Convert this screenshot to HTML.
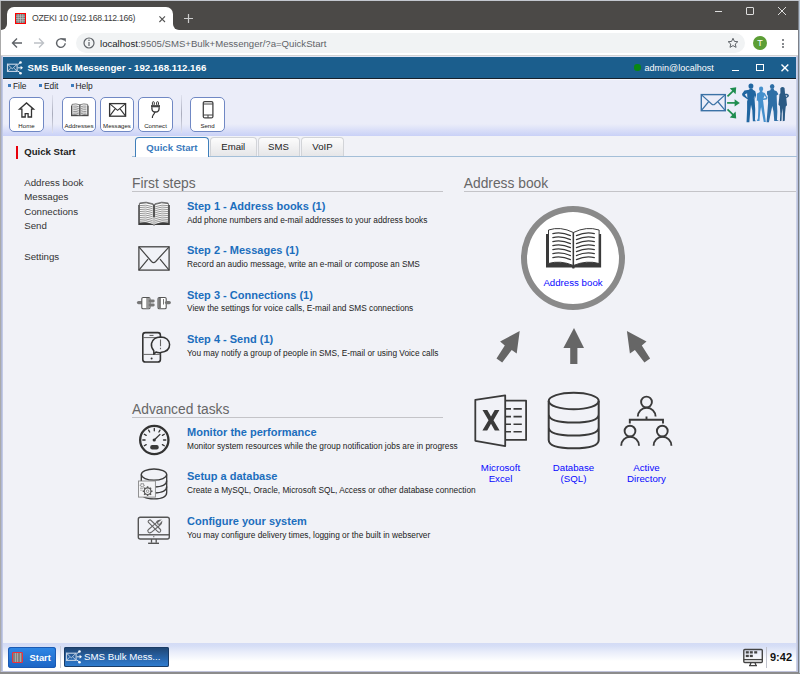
<!DOCTYPE html>
<html><head><meta charset="utf-8">
<style>
*{box-sizing:border-box;margin:0;padding:0}
html,body{width:800px;height:674px;overflow:hidden}
body{position:relative;background:#aaaaaa;font-family:"Liberation Sans",sans-serif;}
.a{position:absolute}
.t{position:absolute;line-height:1;white-space:nowrap}
svg{position:absolute;overflow:visible}
</style></head><body>

<!-- ===== Browser chrome ===== -->
<div class="a" style="left:0;top:0;width:800px;height:1px;background:#c3c7cf"></div>
<div class="a" style="left:1px;top:1px;width:797px;height:29px;background:#4b4947"></div>
<!-- tab -->
<div class="a" style="left:1px;top:23px;width:179px;height:7px;background:#fff"></div>
<div class="a" style="left:7px;top:7px;width:166px;height:23px;background:#fff;border-radius:7px 7px 0 0"></div>
<div class="a" style="left:1px;top:23px;width:6px;height:7px;background:#fff"></div>
<div class="a" style="left:1px;top:22px;width:6px;height:8px;background:#4b4947;border-bottom-right-radius:6px"></div>
<div class="a" style="left:173px;top:22px;width:7px;height:8px;background:#4b4947;border-bottom-left-radius:6px"></div>
<svg style="left:15px;top:13px" width="11" height="11" viewBox="0 0 11 11"><rect x="0.5" y="0.5" width="10" height="10" fill="#7a7a7a" stroke="#f00" stroke-width="1"/><path d="M1 3.2H10M1 5.5H10M1 7.8H10M3.2 1V10M5.5 1V10M7.8 1V10" stroke="#c5d0d0" stroke-width="0.6"/></svg>
<div class="t" style="left:32px;top:13.6px;font-size:8.7px;letter-spacing:-0.3px;color:#3c3c3c">OZEKI 10 (192.168.112.166)</div>
<svg style="left:159px;top:15.8px" width="7" height="7" viewBox="0 0 7 7"><path d="M0.4 0.4L6 6M6 0.4L0.4 6" stroke="#555" stroke-width="1.1"/></svg>
<svg style="left:184px;top:14px" width="9" height="9" viewBox="0 0 9 9"><path d="M4.5 0V9M0 4.5H9" stroke="#ccc" stroke-width="1.2"/></svg>
<!-- window controls -->
<div class="a" style="left:715px;top:11px;width:7px;height:1px;background:#ddd"></div>
<div class="a" style="left:746px;top:7px;width:8px;height:8px;border:1px solid #ddd;border-radius:1px"></div>
<svg style="left:778px;top:7px" width="8" height="8" viewBox="0 0 8 8"><path d="M0 0L8 8M8 0L0 8" stroke="#ddd" stroke-width="1"/></svg>

<!-- toolbar -->
<div class="a" style="left:1px;top:30px;width:797px;height:25px;background:#fff"></div>
<svg style="left:11px;top:37px" width="12" height="12" viewBox="0 0 12 12"><path d="M11 6H2M6 1.5L1.5 6L6 10.5" fill="none" stroke="#5f6368" stroke-width="1.4"/></svg>
<svg style="left:33px;top:37px" width="12" height="12" viewBox="0 0 12 12"><path d="M1 6H10M6 1.5L10.5 6L6 10.5" fill="none" stroke="#bdc1c6" stroke-width="1.4"/></svg>
<svg style="left:55px;top:37px" width="12" height="12" viewBox="0 0 12 12"><path d="M10.2 6.2A4.3 4.3 0 1 1 8.9 3" fill="none" stroke="#5f6368" stroke-width="1.4"/><path d="M7 1.2H10.8V5z" fill="#5f6368"/></svg>
<div class="a" style="left:76px;top:33px;width:669px;height:20px;border-radius:10px;background:#f1f3f4"></div>
<svg style="left:83px;top:37px" width="12" height="12" viewBox="0 0 12 12"><circle cx="6" cy="6" r="5" fill="none" stroke="#5f6368" stroke-width="1.2"/><path d="M6 5V9" stroke="#5f6368" stroke-width="1.2"/><circle cx="6" cy="3.3" r="0.8" fill="#5f6368"/></svg>
<div class="t" style="left:100px;top:38.8px;font-size:9.6px;color:#202124">localhost<span style="color:#5f6368">:9505/SMS+Bulk+Messenger/?a=QuickStart</span></div>
<svg style="left:727px;top:37px" width="12" height="12" viewBox="0 0 24 24"><path d="M12 2.5l2.8 6.3 6.9.6-5.2 4.6 1.6 6.7L12 17.2l-6 3.5 1.5-6.7L2.3 9.4l6.9-.6z" fill="none" stroke="#5f6368" stroke-width="2"/></svg>
<div class="a" style="left:753px;top:36px;width:14px;height:14px;border-radius:50%;background:#5c9e35"></div>
<div class="t" style="left:753px;top:38.5px;width:14px;text-align:center;font-size:9px;color:#fff">T</div>
<div class="a" style="left:782px;top:39px;width:2px;height:2px;background:#5f6368;border-radius:1px"></div>
<div class="a" style="left:782px;top:42.5px;width:2px;height:2px;background:#5f6368;border-radius:1px"></div>
<div class="a" style="left:782px;top:46px;width:2px;height:2px;background:#5f6368;border-radius:1px"></div>
<div class="a" style="left:1px;top:55px;width:797px;height:1px;background:#d2d2d2"></div>

<!-- ===== App ===== -->
<div class="a" id="app" style="left:1px;top:56px;width:797px;height:615px;background:#e4e6f4"></div>
<div class="a" style="left:3px;top:57px;width:793px;height:21px;background:#1b5e8d"></div>
<div class="a" style="left:3px;top:78px;width:793px;height:1px;background:#17222d"></div>
<div class="a" style="left:3px;top:79px;width:793px;height:1px;background:#f6f7fd"></div>
<!-- toolbar bg -->
<div class="a" style="left:3px;top:80px;width:793px;height:56px;background:linear-gradient(#ebedf9 0,#ebedf9 44px,#c9d1f7 56px)"></div>
<!-- content bg -->
<div class="a" style="left:3px;top:136px;width:793px;height:507px;background:#f1f2f7"></div>
<!-- taskbar -->
<div class="a" style="left:3px;top:643px;width:793px;height:27.5px;background:linear-gradient(#d3dbf5 0,#d6def6 3px,#e9edfa 9px,#fafbfe 16px,#fff 18px)"></div>
<div class="a" style="left:1px;top:670.5px;width:797px;height:1.7px;background:linear-gradient(#d6d9ee,#a9adc8)"></div>
<div class="a" style="left:0;top:672.2px;width:800px;height:1.8px;background:#8c8c8c"></div>
<div class="a" style="left:1.2px;top:56px;width:1.8px;height:615px;background:linear-gradient(90deg,#a7afcb,#ccd3ee)"></div>
<div class="a" style="left:795.6px;top:56px;width:2.3px;height:615px;background:linear-gradient(90deg,#e4e7f3,#bcc4e0 40%)"></div>
<div class="a" style="left:797.9px;top:1px;width:1.1px;height:672px;background:#7c8088"></div>
<div class="a" style="left:799px;top:1px;width:1px;height:672px;background:#b4c3d3"></div>


<!-- header content -->
<svg style="left:4px;top:58px" width="24" height="20" viewBox="0 0 24 20"><rect x="3.5" y="6.2" width="9.6" height="7.2" fill="none" stroke="#c9d6e6" stroke-width="1.1"/><path d="M3.5 6.2L8.3 10.8L13.1 6.2M3.5 13.4L6.5 10.2M13.1 13.4L10.1 10.2" fill="none" stroke="#c9d6e6" stroke-width="0.9"/><path d="M13.8 6.6L16.5 4.5M13.8 9.8H17.5M13.8 13L16.5 15" stroke="#dfe8f0" stroke-width="1" fill="none"/><circle cx="16.5" cy="4.5" r="1.3" fill="#f4f8fc"/><circle cx="16.5" cy="15.3" r="1.3" fill="#f4f8fc"/><path d="M19 9.8L16.6 7.8V11.8z" fill="#f4f8fc"/></svg>
<div class="t" style="left:27.5px;top:62.8px;font-size:9.7px;font-weight:bold;color:#fff">SMS Bulk Messenger - 192.168.112.166</div>
<div class="a" style="left:634.2px;top:64.4px;width:6.6px;height:6.6px;border-radius:50%;background:#0a8812"></div>
<div class="t" style="left:644.5px;top:64px;font-size:9px;color:#fff">admin@localhost</div>
<div class="a" style="left:731.6px;top:69.7px;width:7px;height:1.5px;background:#fff"></div>
<div class="a" style="left:756.2px;top:63.8px;width:7.6px;height:7.2px;border:1.5px solid #fff"></div>
<svg style="left:781.3px;top:63.6px" width="8" height="8" viewBox="0 0 8 8"><path d="M0.5 0.5L7.3 7.3M7.3 0.5L0.5 7.3" stroke="#fff" stroke-width="1.4"/></svg>

<!-- menu -->
<div class="a" style="left:8px;top:84.4px;width:2.9px;height:2.7px;background:#3d7bbd"></div>
<div class="t" style="left:13px;top:82.2px;font-size:8.4px;color:#222">File</div>
<div class="a" style="left:39.3px;top:84.4px;width:2.9px;height:2.7px;background:#3d7bbd"></div>
<div class="t" style="left:44px;top:82.2px;font-size:8.4px;color:#222">Edit</div>
<div class="a" style="left:70.8px;top:84.4px;width:2.9px;height:2.7px;background:#3d7bbd"></div>
<div class="t" style="left:75.5px;top:82.2px;font-size:8.4px;color:#222">Help</div>

<!-- toolbar buttons -->
<div class="a" style="left:9px;top:97px;width:34.5px;height:34.5px;border:1px solid #7088c4;border-radius:5px;background:#fff"></div>
<div class="a" style="left:62px;top:97px;width:34px;height:34.5px;border:1px solid #7088c4;border-radius:5px;background:#fff"></div>
<div class="a" style="left:100px;top:97px;width:34px;height:34.5px;border:1px solid #7088c4;border-radius:5px;background:#fff"></div>
<div class="a" style="left:138px;top:97px;width:34.5px;height:34.5px;border:1px solid #7088c4;border-radius:5px;background:#fff"></div>
<div class="a" style="left:190px;top:97px;width:34.5px;height:34.5px;border:1px solid #7088c4;border-radius:5px;background:#fff"></div>
<div class="a" style="left:52px;top:95px;width:1.2px;height:38px;background:linear-gradient(#dfe1ee,#a9acbc 50%,#dfe1ee)"></div>
<div class="a" style="left:181px;top:95px;width:1.2px;height:38px;background:linear-gradient(#dfe1ee,#a9acbc 50%,#dfe1ee)"></div>
<!-- icons -->
<svg style="left:9px;top:97px" width="35" height="35" viewBox="0 0 35 35"><path d="M10.4 12.2L17.5 5.9L24.6 12.2H22.5V20H19.1V16.6H16.2V20H12.9V12.2Z" fill="none" stroke="#333" stroke-width="1.3" stroke-linejoin="miter"/></svg>
<svg style="left:70.5px;top:102.8px" width="17.6" height="13.4" viewBox="0 0 17.6 13.4"><rect x="0" y="2.6" width="17.6" height="10.6" fill="#484848"/><path d="M1 1.4Q4.8 0.2 8.8 1.8V12.6Q4.8 11.2 1 12Z M16.6 1.4Q12.8 0.2 8.8 1.8V12.6Q12.8 11.2 16.6 12Z" fill="#f2f2f2" stroke="#555" stroke-width="0.7"/><path d="M2.2 3.2Q5 2.6 7.8 3.8M2.2 5.0Q5 4.4 7.8 5.6M2.2 6.8Q5 6.2 7.8 7.4M2.2 8.6Q5 8.0 7.8 9.2M2.2 10.2Q5 9.6 7.8 10.8M15.4 3.2Q12.6 2.6 9.8 3.8M15.4 5.0Q12.6 4.4 9.8 5.6M15.4 6.8Q12.6 6.2 9.8 7.4M15.4 8.6Q12.6 8.0 9.8 9.2M15.4 10.2Q12.6 9.6 9.8 10.8" fill="none" stroke="#777" stroke-width="0.75"/><path d="M8.8 1.8V13" stroke="#555" stroke-width="0.8"/></svg>
<svg style="left:100px;top:97px" width="35" height="35" viewBox="0 0 35 35"><rect x="9.6" y="6.6" width="16" height="12.6" fill="none" stroke="#333" stroke-width="1.3"/><path d="M9.6 6.6L17.6 13.4L25.6 6.6M9.6 19.2L15.3 11.6M25.6 19.2L19.9 11.6" fill="none" stroke="#333" stroke-width="1.1"/></svg>
<svg style="left:138px;top:97px" width="35" height="35" viewBox="0 0 35 35"><rect x="14.4" y="4.7" width="1.9" height="3.6" rx="0.9" fill="none" stroke="#333" stroke-width="1"/><rect x="18.6" y="4.7" width="1.9" height="3.6" rx="0.9" fill="none" stroke="#333" stroke-width="1"/><rect x="13" y="8.1" width="9" height="2.2" fill="#444"/><path d="M13.9 10.2V11.5Q13.9 15 17.5 15Q21.1 15 21.1 11.5V10.2" fill="none" stroke="#333" stroke-width="1.3"/><path d="M17 15Q16.2 17 15.2 18Q14.2 19.3 14.4 21" fill="none" stroke="#333" stroke-width="1.2"/></svg>
<svg style="left:190px;top:97px" width="35" height="35" viewBox="0 0 35 35"><rect x="13.3" y="4.6" width="9.6" height="16.3" rx="1.5" fill="none" stroke="#444" stroke-width="1.3"/><path d="M13.3 7H22.9M13.3 18H22.9M18 18V20.9" stroke="#444" stroke-width="1"/></svg>
<div class="t" style="left:9px;top:122.5px;width:35px;text-align:center;font-size:6.1px;color:#222">Home</div>
<div class="t" style="left:62px;top:122.5px;width:34px;text-align:center;font-size:6.2px;color:#222">Addresses</div>
<div class="t" style="left:100px;top:122.5px;width:34px;text-align:center;font-size:6.1px;color:#222">Messages</div>
<div class="t" style="left:138px;top:122.5px;width:35px;text-align:center;font-size:6.1px;color:#222">Connect</div>
<div class="t" style="left:190px;top:122.5px;width:35px;text-align:center;font-size:6.1px;color:#222">Send</div>

<!-- logo -->
<svg style="left:738px;top:80px" width="56" height="46" viewBox="0 0 800 657">
<g fill="#4590cd"><ellipse cx="330" cy="127" rx="30" ry="33"/><path fill-rule="evenodd" d="M315 155L345 155L352 175L382 187L422 255L410 278L357 287L362 322L377 450L398 600L368 600L342 455L330 385L318 455L307 585L268 585L285 545L290 420L290 322L285 292L268 300L272 192L308 175Z M382 218L402 258L362 265Z"/></g>
<g fill="#2b5a85"><path fill-rule="evenodd" d="M605 118Q635 80 665 115L672 198L702 195L728 215L722 238L690 262L700 362L682 377L672 480L668 583L640 588L640 480L634 405L626 480L622 583L598 588L604 480L598 372L578 352L588 262L592 202L606 188Z M680 218L706 222L688 248Z"/></g>
<g fill="#2e6ea6"><ellipse cx="488" cy="93" rx="32" ry="37"/><path d="M468 125L510 125L517 145L552 160L577 205L552 222L556 330L562 450L557 572L585 587L518 587L508 452L490 372L472 452L442 603L408 603L420 452L430 330L425 222L413 202L415 160L462 145Z"/></g>
<g fill="#2166a1"><ellipse cx="185" cy="87" rx="35" ry="38"/><path fill-rule="evenodd" d="M165 120L207 120L212 140L247 160L260 215L242 268L226 264L232 218L238 292L246 420L242 568L254 588L212 588L204 432L186 352L176 432L162 603L122 603L130 422L130 302L140 278L66 228L57 200L92 150L160 140Z M97 206L130 190L134 256Z"/></g>
</svg>
<svg style="left:699px;top:82px" width="92" height="42" viewBox="0 0 92 42"><rect x="2.3" y="12.6" width="24" height="16.1" fill="none" stroke="#3b72a6" stroke-width="1.4"/><path d="M2.3 12.6L12.6 22Q14.3 23.5 16 22L26.3 12.6M2.3 28.7L9.4 20M26.3 28.7L19.1 20" fill="none" stroke="#3b72a6" stroke-width="1.2"/>
<g stroke="#1e8d4f" stroke-width="1.7" fill="#1e8d4f"><path d="M28.5 14.4L34.5 8.6"/><path d="M37.2 5.2L30.8 6.3L36.6 12.2Z" stroke="none"/><path d="M28.1 20.9H36.5"/><path d="M40.8 20.9L35.6 17.2V24.6Z" stroke="none"/><path d="M28.5 27.4L34.5 33.2"/><path d="M37.2 36.6L30.8 35.5L36.6 29.6Z" stroke="none"/></g></svg>


<!-- sidebar -->
<div class="a" style="left:16px;top:146px;width:2.2px;height:13px;background:#e8000b"></div>
<div class="t" style="left:24.3px;top:147.2px;font-size:9.6px;font-weight:bold;color:#222">Quick Start</div>
<div class="t" style="left:24.2px;top:177.8px;font-size:9.7px;color:#333">Address book</div>
<div class="t" style="left:24.2px;top:192.3px;font-size:9.7px;color:#333">Messages</div>
<div class="t" style="left:24.2px;top:206.8px;font-size:9.7px;color:#333">Connections</div>
<div class="t" style="left:24.2px;top:221.3px;font-size:9.7px;color:#333">Send</div>
<div class="t" style="left:24.2px;top:251.5px;font-size:9.7px;color:#333">Settings</div>

<!-- tabs -->
<div class="a" style="left:131.5px;top:156px;width:665px;height:1.3px;background:#a4bfd8"></div>
<div class="a" style="left:210px;top:136.6px;width:46.5px;height:19.9px;border:1px solid #d2d4d8;border-bottom:none;border-radius:4px 4px 0 0;background:linear-gradient(#fcfcfc,#e6e6e8)"></div>
<div class="a" style="left:257.5px;top:136.6px;width:42px;height:19.9px;border:1px solid #d2d4d8;border-bottom:none;border-radius:4px 4px 0 0;background:linear-gradient(#fcfcfc,#e6e6e8)"></div>
<div class="a" style="left:300.8px;top:136.6px;width:43.4px;height:19.9px;border:1px solid #d2d4d8;border-bottom:none;border-radius:4px 4px 0 0;background:linear-gradient(#fcfcfc,#e6e6e8)"></div>
<div class="a" style="left:134.8px;top:136.8px;width:74.3px;height:20.5px;border:1.2px solid #3f7fba;border-top-width:1.4px;border-bottom:none;border-radius:4px 4px 0 0;background:#fff"></div>
<div class="t" style="left:134.8px;top:142.6px;width:74.3px;text-align:center;font-size:9.6px;font-weight:bold;color:#3b7bbd">Quick Start</div>
<div class="t" style="left:210px;top:142.2px;width:46.5px;text-align:center;font-size:9.6px;color:#222">Email</div>
<div class="t" style="left:257.5px;top:142.2px;width:42px;text-align:center;font-size:9.6px;color:#222">SMS</div>
<div class="t" style="left:300.8px;top:142.2px;width:43.4px;text-align:center;font-size:9.6px;color:#222">VoIP</div>

<!-- headings -->
<div class="t" style="left:132px;top:176.7px;font-size:13.8px;color:#676767">First steps</div>
<div class="a" style="left:132px;top:191px;width:311px;height:1px;background:#c4c4c8"></div>
<div class="t" style="left:463.8px;top:176.7px;font-size:13.8px;color:#676767">Address book</div>
<div class="a" style="left:464px;top:191px;width:332px;height:1px;background:#c4c4c8"></div>
<div class="t" style="left:132px;top:402.9px;font-size:13.8px;color:#676767">Advanced tasks</div>
<div class="a" style="left:132px;top:417px;width:311px;height:1px;background:#c4c4c8"></div>

<!-- steps -->
<div class="t" style="left:187px;top:200.9px;font-size:11px;font-weight:bold;color:#1c6ebd">Step 1 - Address books (1)</div>
<div class="t" style="left:187px;top:216.3px;font-size:8.3px;color:#222">Add phone numbers and e-mail addresses to your address books</div>
<div class="t" style="left:187px;top:245.4px;font-size:11px;font-weight:bold;color:#1c6ebd">Step 2 - Messages (1)</div>
<div class="t" style="left:187px;top:260.3px;font-size:8.3px;color:#222">Record an audio message, write an e-mail or compose an SMS</div>
<div class="t" style="left:187px;top:289.8px;font-size:11px;font-weight:bold;color:#1c6ebd">Step 3 - Connections (1)</div>
<div class="t" style="left:187px;top:304.4px;font-size:8.3px;color:#222">View the settings for voice calls, E-mail and SMS connections</div>
<div class="t" style="left:187px;top:333.7px;font-size:11px;font-weight:bold;color:#1c6ebd">Step 4 - Send (1)</div>
<div class="t" style="left:187px;top:349px;font-size:8.3px;color:#222">You may notify a group of people in SMS, E-mail or using Voice calls</div>

<div class="t" style="left:187px;top:426.7px;font-size:11px;font-weight:bold;color:#1c6ebd">Monitor the performance</div>
<div class="t" style="left:187px;top:441.5px;font-size:8.3px;color:#222">Monitor system resources while the group notification jobs are in progress</div>
<div class="t" style="left:187px;top:471.1px;font-size:11px;font-weight:bold;color:#1c6ebd">Setup a database</div>
<div class="t" style="left:187px;top:485.8px;font-size:8.3px;color:#222">Create a MySQL, Oracle, Microsoft SQL, Access or other database connection</div>
<div class="t" style="left:187px;top:515.9px;font-size:11px;font-weight:bold;color:#1c6ebd">Configure your system</div>
<div class="t" style="left:187px;top:531px;font-size:8.3px;color:#222">You may configure delivery times, logging or the built in webserver</div>


<!-- symbols -->
<svg width="0" height="0" style="position:absolute;left:0;top:0"><defs>
<symbol id="book" viewBox="5.6 6 55.4 40.5">
<rect x="5.6" y="12" width="55.3" height="33.5" fill="#3a3a3a"/>
<path d="M8.1 8Q20 4 33 10.5V43.5Q20 38 8.1 41.5Z M58.7 8Q46 4 33 10.5V43.5Q46 38 58.7 41.5Z" fill="#fff" stroke="#3a3a3a" stroke-width="1"/>
<path d="M33 10.5V45.5" stroke="#3a3a3a" stroke-width="1.4"/>
<circle cx="33" cy="45.8" r="1.3" fill="#3a3a3a"/>
<g fill="none" stroke="#3a3a3a" stroke-width="1.15" stroke-linecap="round">
<path d="M12.4 11.6Q21 9.6 30.1 13.6M12.4 15.6Q21 13.6 30.1 17.6M12.4 19.6Q21 17.6 30.1 21.6M12.4 23.6Q21 21.6 30.1 25.6M12.4 27.6Q21 25.6 30.1 29.6M12.4 31.6Q21 29.6 30.1 33.6M12.4 35.6Q21 33.6 30.1 37.6"/>
<path d="M54 11.6Q45 9.6 36 13.6M54 15.6Q45 13.6 36 17.6M54 19.6Q45 17.6 36 21.6M54 23.6Q45 21.6 36 25.6M54 27.6Q45 25.6 36 29.6M54 31.6Q45 29.6 36 33.6M54 35.6Q45 33.6 36 37.6"/>
</g></symbol>
</defs></svg>

<!-- step icons -->
<svg style="left:136px;top:200px" width="36" height="28" viewBox="0 0 36 28"><rect x="2.3" y="5" width="31.5" height="20" fill="#3c3c3c"/>
<path d="M3.4 3.6Q10 1.6 17.3 4.5V24.6Q10 21.2 3.4 23Z M32.4 3.6Q25.8 1.6 18.7 4.5V24.6Q25.8 21.2 32.4 23Z" fill="#fff" stroke="#444" stroke-width="0.8"/>
<path d="M3.6 2.9Q10 1 17.3 3.8M32.2 2.9Q25.8 1 18.7 3.8" fill="none" stroke="#555" stroke-width="0.7"/>
<path d="M3.9 5.6Q9.5 4.2 16.4 6.7M3.9 7.5Q9.5 6.1 16.4 8.6M3.9 9.5Q9.5 8.1 16.4 10.6M3.9 11.5Q9.5 10.1 16.4 12.6M3.9 13.5Q9.5 12.1 16.4 14.6M3.9 15.5Q9.5 14.1 16.4 16.6M3.9 17.5Q9.5 16.1 16.4 18.6M3.9 19.4Q9.5 18.0 16.4 20.5M3.9 21.2Q9.5 19.8 16.4 22.3M31.9 5.6Q26.3 4.2 19.4 6.7M31.9 7.5Q26.3 6.1 19.4 8.6M31.9 9.5Q26.3 8.1 19.4 10.6M31.9 11.5Q26.3 10.1 19.4 12.6M31.9 13.5Q26.3 12.1 19.4 14.6M31.9 15.5Q26.3 14.1 19.4 16.6M31.9 17.5Q26.3 16.1 19.4 18.6M31.9 19.4Q26.3 18.0 19.4 20.5M31.9 21.2Q26.3 19.8 19.4 22.3" fill="none" stroke="#505050" stroke-width="0.62"/>
<rect x="17.2" y="4.4" width="1.6" height="12.8" fill="#555"/><rect x="17.2" y="17.2" width="1.6" height="7.6" fill="#ddd"/><path d="M16.5 24.8Q18 26.3 19.5 24.8" fill="#3c3c3c"/></svg>
<svg style="left:134px;top:242px" width="40" height="32" viewBox="0 0 40 32"><rect x="4.9" y="4.8" width="30.2" height="23.3" fill="none" stroke="#444" stroke-width="1.3"/><path d="M4.9 4.8L17.5 19.5Q19.6 21.6 21.7 19.5L35.1 4.8M4.9 28.1L14 17.2M35.1 28.1L26 17.2" fill="none" stroke="#444" stroke-width="1.2"/></svg>
<svg style="left:134px;top:292px" width="40" height="20" viewBox="0 0 40 20"><path d="M4.5 10.6H7.5" stroke="#777" stroke-width="3.2" stroke-linecap="round"/><rect x="7.8" y="5.5" width="8.2" height="11.3" rx="1.3" fill="#fff" stroke="#555" stroke-width="1.1"/><rect x="12.2" y="6" width="3.4" height="10.3" fill="#999"/><path d="M16 9H19.3M16 13H19.3" stroke="#777" stroke-width="2.8" stroke-linecap="round"/><rect x="24" y="5.5" width="8.2" height="11.3" rx="1.3" fill="#fff" stroke="#555" stroke-width="1.1"/><rect x="24.3" y="6" width="2.6" height="10.3" fill="#777"/><path d="M29.5 7V12.5" stroke="#666" stroke-width="0.9"/><path d="M32.5 10.6H35.3" stroke="#777" stroke-width="3.2" stroke-linecap="round"/></svg>
<svg style="left:134px;top:328px" width="40" height="38" viewBox="0 0 40 38"><rect x="8.8" y="4.6" width="17.6" height="29.4" rx="2.6" fill="none" stroke="#333" stroke-width="1.6"/><path d="M15.5 7.4H19.5" stroke="#555" stroke-width="1"/><path d="M8.8 9.6H26.4M8.8 26.4H26.4" stroke="#666" stroke-width="1"/><circle cx="17.6" cy="30.4" r="1" fill="#333"/><path d="M19.8 22.8Q16.8 19 17.5 15.5Q19 9.2 26.5 9Q34.8 9.2 35.6 16.5Q35.7 23.5 26.5 24.6Q24 24.8 22 24L19.8 26.3Z" fill="#f1f2f7" stroke="#333" stroke-width="1.5" stroke-linejoin="round"/><path d="M26.5 11.5V18.2M26.5 19.8V21.2" stroke="#666" stroke-width="1.1"/></svg>

<svg style="left:136px;top:421px" width="36" height="36" viewBox="0 0 36 36"><circle cx="18.3" cy="19" r="14.15" fill="none" stroke="#333" stroke-width="2.3"/>
<g stroke="#333" stroke-width="1.3" stroke-linecap="round"><path d="M18.3 7.5V9.8M12.6 9.1L13.7 11M8.3 13.3L10.2 14.4M6.8 19H9.1M8.3 24.7L10.2 23.6M28.3 13.3L26.4 14.4M29.8 19H27.5M28.3 24.7L26.4 23.6M24 9.1L22.9 11"/></g>
<path d="M18.2 19L24.3 13.1" stroke="#333" stroke-width="1.3"/><circle cx="18.2" cy="19" r="1.6" fill="#333"/><rect x="14.2" y="24.1" width="8.5" height="4.5" rx="2" fill="#3a3a3a"/></svg>

<svg style="left:134px;top:465px" width="38" height="38" viewBox="0 0 38 38"><path d="M7.3 9.6V27.4Q7.3 33.8 20 33.8Q32.7 33.8 32.7 27.4V9.6" fill="none" stroke="#3a3a3a" stroke-width="1.3"/><ellipse cx="20" cy="9.6" rx="12.7" ry="5.6" fill="none" stroke="#3a3a3a" stroke-width="1.3"/><path d="M7.3 15.6Q7.3 22 20 22Q32.7 22 32.7 15.6M7.3 21.6Q7.3 28 20 28Q32.7 28 32.7 21.6" fill="none" stroke="#3a3a3a" stroke-width="1.3"/><rect x="4.5" y="16" width="16.9" height="16.1" fill="#f4f4f6" stroke="#888" stroke-width="0.9"/><circle cx="13.6" cy="26.2" r="3.3" fill="none" stroke="#5a5a5a" stroke-width="1.1"/><path d="M16.80 26.20L18.50 26.20M15.86 28.46L17.06 29.66M13.60 29.40L13.60 31.10M11.34 28.46L10.14 29.66M10.40 26.20L8.70 26.20M11.34 23.94L10.14 22.74M13.60 23.00L13.60 21.30M15.86 23.94L17.06 22.74" stroke="#5a5a5a" stroke-width="1.5"/><circle cx="13.6" cy="26.2" r="1.3" fill="none" stroke="#777" stroke-width="0.7"/><circle cx="8.2" cy="20.3" r="1.6" fill="none" stroke="#888" stroke-width="0.8"/><path d="M9.80 20.30L10.80 20.30M9.00 21.69L9.50 22.55M7.40 21.69L6.90 22.55M6.60 20.30L5.60 20.30M7.40 18.91L6.90 18.05M9.00 18.91L9.50 18.05" stroke="#888" stroke-width="0.9"/><path d="M6 23.5H9M6 25.2H8.5" stroke="#999" stroke-width="0.7"/></svg>

<svg style="left:134px;top:512.5px" width="40" height="34" viewBox="0 0 40 34"><rect x="4.3" y="4.3" width="31" height="21.7" rx="2" fill="none" stroke="#555" stroke-width="1.4"/><path d="M4.3 21.8H35.3" stroke="#555" stroke-width="1.4"/><circle cx="19.8" cy="23.7" r="0.6" fill="#555"/><path d="M17.5 26V29.8M22.2 26V29.8" stroke="#555" stroke-width="1.3"/><path d="M14.1 30.3H25" stroke="#555" stroke-width="1.4"/>
<g fill="none" stroke="#666" stroke-width="1.1"><path d="M15 7.3Q13.6 8.3 14.5 9.5L24 18.8Q25.5 20 26.5 18.5Q27.3 17.2 26 16L16.6 7Q15.8 6.7 15 7.3Z"/><path d="M26 7.2L23.5 9.2L23.9 11L25.7 11.4L27.7 9Q27.6 11.6 25.8 12.3L17.3 19.3Q15.7 20.5 14.3 19.2Q13.1 17.6 14.5 16.5L22.3 9.8Q22.6 7.6 26 7.2Z"/></g></svg>


<!-- diagram -->
<div class="a" style="left:521.2px;top:205.6px;width:104.2px;height:104.3px;border-radius:50%;border:6px solid #8a8a8a;background:#fff"></div>
<svg style="left:545.6px;top:228px" width="55.4" height="40.5"><use href="#book" width="55.4" height="40.5"/></svg>
<div class="t" style="left:521px;top:278.2px;width:104px;text-align:center;font-size:9.7px;color:#0808ff">Address book</div>
<svg style="left:485px;top:320px" width="180" height="50" viewBox="0 0 180 50"><g fill="#666">
<path d="M34.7 10.9L31.7 33.5L26.7 29.9L17.2 42.4L11.5 38.5L19.8 25.5L15.1 21.6Z"/>
<path d="M89 7.9L99 28H92.4V44H85.2V28H78.4Z"/>
<path d="M141.9 10.9L144.9 33.5L149.9 29.9L159.4 42.4L165.1 38.5L156.8 25.5L161.5 21.6Z"/>
</g></svg>

<svg style="left:470px;top:390px" width="65" height="60" viewBox="0 0 65 60"><g fill="none" stroke="#3a3a3a" stroke-width="1.8" stroke-linejoin="round"><path d="M5.3 9.8L35.2 5.3V56.1L5.3 50.8Z"/><path d="M35.2 10.7H56.1V49.9H35.2"/></g>
<g stroke="#3a3a3a" stroke-width="1.6"><path d="M35.6 18.9H41M43.5 18.9H51.8M35.6 26.6H41M43.5 26.6H51.8M35.6 34.2H41M43.5 34.2H51.8M35.6 41.8H41M43.5 41.8H51.8"/></g>
<path d="M12.5 20H17.3L21 26.6L24.7 20H29.4L23.5 30.2L29.6 40.5H24.8L21 33.8L17.2 40.5H12.4L18.5 30.2Z" fill="#3a3a3a"/></svg>

<svg style="left:540px;top:385px" width="70" height="70" viewBox="0 0 70 70"><g fill="none" stroke="#3a3a3a" stroke-width="2"><ellipse cx="33.7" cy="16" rx="25" ry="8.3"/><path d="M8.7 16V55Q8.7 63.3 33.7 63.3Q58.7 63.3 58.7 55V16M8.7 29.2Q8.7 37.5 33.7 37.5Q58.7 37.5 58.7 29.2M8.7 42.2Q8.7 50.5 33.7 50.5Q58.7 50.5 58.7 42.2"/></g></svg>

<svg style="left:612px;top:390px" width="70" height="60" viewBox="0 0 70 60"><g fill="none" stroke="#3a3a3a" stroke-width="1.9"><circle cx="34.5" cy="12" r="5.4"/><path d="M25.8 26.6A8.9 8.9 0 0 1 43.6 26.6"/><path d="M17.8 33.5V29.8H51V33.5M34.5 29.8V26.5"/><circle cx="18" cy="41.1" r="5.4"/><path d="M9.2 55.7A8.9 8.9 0 0 1 27 55.7"/><circle cx="50.3" cy="41.1" r="5.4"/><path d="M41.6 55.7A8.9 8.9 0 0 1 59.4 55.7"/></g></svg>

<div class="t" style="left:460px;top:462.3px;width:81px;text-align:center;font-size:9.7px;line-height:11px;color:#0808ff;white-space:normal">Microsoft<br>Excel</div>
<div class="t" style="left:533px;top:462.3px;width:81px;text-align:center;font-size:9.7px;line-height:11px;color:#0808ff;white-space:normal">Database<br>(SQL)</div>
<div class="t" style="left:606px;top:462.3px;width:81px;text-align:center;font-size:9.7px;line-height:11px;color:#0808ff;white-space:normal">Active<br>Directory</div>

<!-- taskbar content -->
<div class="a" style="left:8px;top:647px;width:48px;height:20.5px;border-radius:3px;background:linear-gradient(#2f88e6,#1c64c4);box-shadow:inset 0 0 0 1px #1a5ab4"></div>
<div class="a" style="left:12.3px;top:652px;width:11px;height:11.3px;border:1.3px solid #f0303a;background:repeating-linear-gradient(90deg,#808080 0 1.6px,#a8a8a8 1.6px 2.6px);border-radius:1px"></div>
<div class="t" style="left:29.5px;top:652.6px;font-size:9.4px;font-weight:bold;color:#fff">Start</div>
<div class="a" style="left:59.5px;top:646px;width:1px;height:22px;background:#c8cbd8"></div>
<div class="a" style="left:63.8px;top:647.3px;width:105.2px;height:19.5px;border-radius:2px;background:linear-gradient(#1f4470,#2b70bd 75%,#2f7ed2);box-shadow:inset 0 0 0 1px #1a3c66"></div>
<svg style="left:63px;top:647px" width="24" height="20" viewBox="0 0 24 20"><rect x="3.5" y="6.2" width="9.6" height="7.2" fill="none" stroke="#c3d2e4" stroke-width="1.1"/><path d="M3.5 6.2L8.3 10.8L13.1 6.2M3.5 13.4L6.5 10.2M13.1 13.4L10.1 10.2" fill="none" stroke="#c3d2e4" stroke-width="0.9"/><path d="M13.8 6.6L16.5 4.5M13.8 9.8H17.5M13.8 13L16.5 15" stroke="#dfe8f0" stroke-width="1" fill="none"/><circle cx="16.5" cy="4.5" r="1.3" fill="#f4f8fc"/><circle cx="16.5" cy="15.3" r="1.3" fill="#f4f8fc"/><path d="M19 9.8L16.6 7.8V11.8z" fill="#f4f8fc"/></svg>
<div class="t" style="left:84px;top:652.2px;font-size:9.7px;color:#fff">SMS Bulk Mess...</div>
<svg style="left:740px;top:646px" width="26" height="22" viewBox="0 0 26 22"><rect x="3.8" y="3.5" width="18.5" height="13" rx="1" fill="none" stroke="#444" stroke-width="1.4"/><path d="M3.8 13.6H22.3" stroke="#444" stroke-width="1.3"/><path d="M11 16.5L10 19.5M15 16.5L16 19.5M9 19.6H17" stroke="#444" stroke-width="1.3"/><g fill="#444"><rect x="5.8" y="5.2" width="3" height="2.3"/><rect x="9.8" y="5.2" width="3" height="2.3"/><rect x="14.2" y="5.2" width="3" height="2.3"/><rect x="5.8" y="8.8" width="3" height="2.3"/><rect x="9.8" y="8.8" width="3" height="2.3"/></g></svg>
<div class="a" style="left:766px;top:647px;width:1px;height:21px;background:#c0c2cc"></div>
<div class="t" style="left:770px;top:652.4px;font-size:11px;font-weight:bold;color:#111">9:42</div>

</body></html>
